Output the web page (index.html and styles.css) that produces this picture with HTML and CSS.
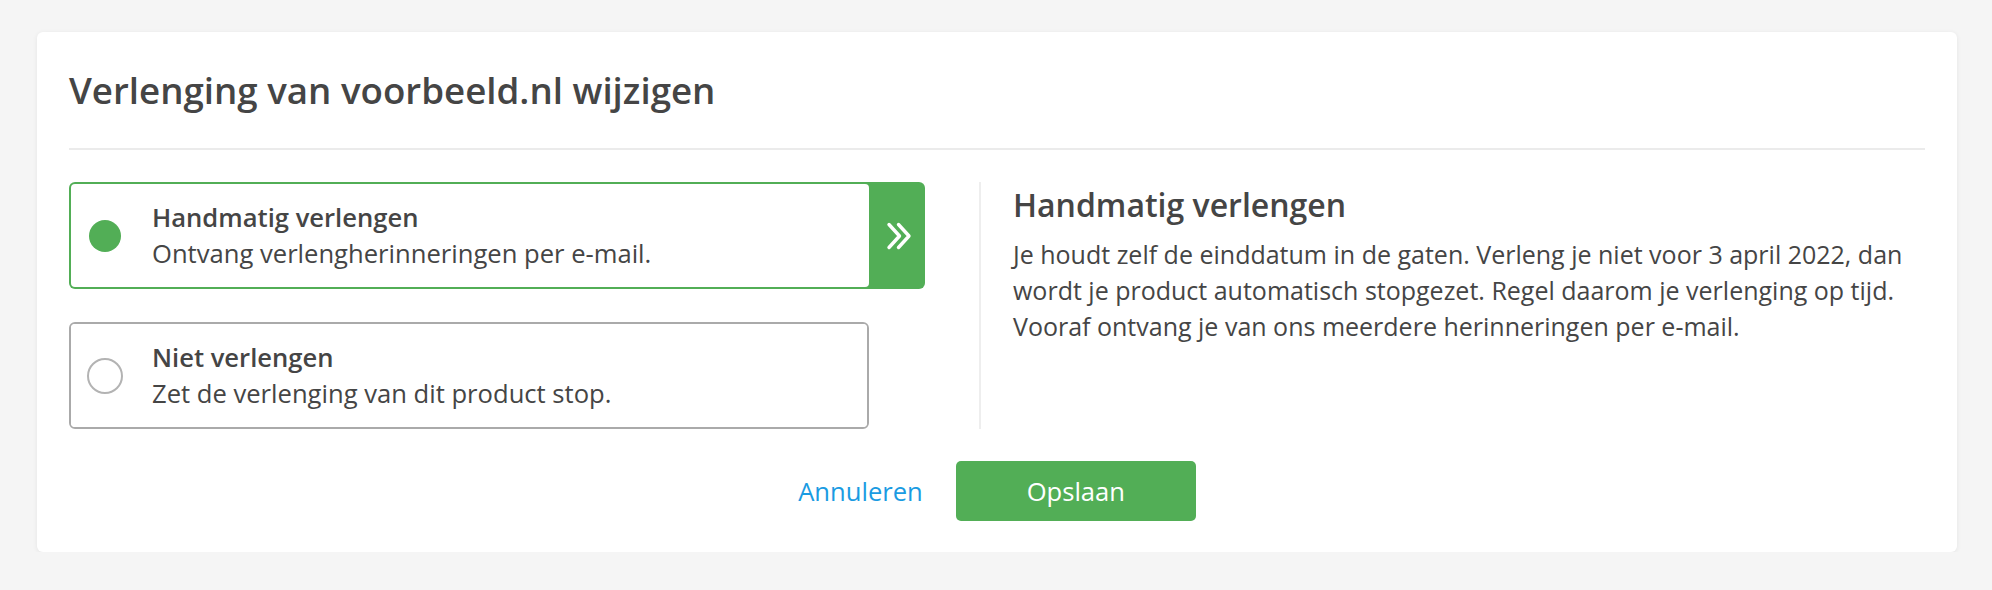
FILE: index.html
```html
<!DOCTYPE html>
<html lang="nl">
<head>
<meta charset="utf-8">
<title>Verlenging wijzigen</title>
<link rel="stylesheet" href="styles.css">
</head>
<body>
<div class="page">
  <div class="card">
    <h1 class="title">Verlenging van voorbeeld.nl wijzigen</h1>
    <div class="sep"></div>
    <div class="body">
      <div class="options">
        <div class="option option--selected">
          <div class="option-main">
            <span class="radio radio--on"></span>
            <span class="option-text">
              <span class="option-title">Handmatig verlengen</span>
              <span class="option-desc">Ontvang verlengherinneringen per e-mail.</span>
            </span>
          </div>
          <span class="option-tab">
            <svg class="chev" width="28" height="30" viewBox="0 0 28 30" aria-hidden="true">
              <path d="M4 3.5 L14.5 15 L4 26.5" fill="none" stroke="#fff" stroke-width="3.4" stroke-linecap="round" stroke-linejoin="round"/>
              <path d="M13.5 3.5 L24 15 L13.5 26.5" fill="none" stroke="#fff" stroke-width="3.4" stroke-linecap="round" stroke-linejoin="round"/>
            </svg>
          </span>
        </div>
        <div class="option">
          <div class="option-main">
            <span class="radio"></span>
            <span class="option-text">
              <span class="option-title">Niet verlengen</span>
              <span class="option-desc">Zet de verlenging van dit product stop.</span>
            </span>
          </div>
        </div>
      </div>
      <div class="info">
        <h2 class="info-title">Handmatig verlengen</h2>
        <p class="info-text">Je houdt zelf de einddatum in de gaten. Verleng je niet voor 3 april 2022, dan wordt je product automatisch stopgezet. Regel daarom je verlenging op tijd. Vooraf ontvang je van ons meerdere herinneringen per e-mail.</p>
      </div>
    </div>
    <div class="actions">
      <a class="cancel" href="#">Annuleren</a>
      <button class="save" type="button">Opslaan</button>
    </div>
  </div>
</div>
</body>
</html>
```

FILE: styles.css
```css
* { box-sizing: border-box; }

html, body {
  margin: 0;
  padding: 0;
  background: #f5f5f5;
  font-family: "Open Sans", "Noto Sans", "Liberation Sans", sans-serif;
  color: #454545;
}

.page {
  padding: 32px 35px 0 37px;
}

.card {
  width: 1920px;
  background: #fff;
  border-radius: 6px;
  box-shadow: 0 1px 5px rgba(0, 0, 0, 0.07);
  padding: 32px 32px 31px;
}

.title {
  margin: 0;
  font-size: 36.7px;
  font-weight: 600;
  line-height: 52px;
  color: #454545;
}

.sep {
  height: 2px;
  background: #ebebeb;
  margin-top: 32px;
}

.body {
  display: flex;
  margin-top: 32px;
}

.options {
  width: 910px;
  flex: none;
  display: flex;
  flex-direction: column;
  gap: 33px;
}

.option {
  display: flex;
  width: 800px;
  border: 2px solid #aaaaaa;
  border-radius: 6px;
  background: #fff;
}

.option--selected {
  width: auto;
  align-self: flex-start;
  border: none;
  background: #52ae56;
  padding: 2px 0 2px 2px;
}

.option-main {
  display: flex;
  align-items: center;
  padding: 16px 16px 15px 16px;
  width: 796px;
  background: #fff;
  border-radius: 4px;
}

.option--selected .option-main {
  width: 798px;
}

.radio {
  flex: none;
  width: 36px;
  height: 36px;
  border-radius: 50%;
  border: 2px solid #b3b3b3;
  margin-right: 29px;
}

.radio--on {
  border: 2px solid transparent;
  background: #52ae56;
  background-clip: content-box;
}

.option-text {
  display: flex;
  flex-direction: column;
  font-size: 25.6px;
  line-height: 36px;
}

.option-title {
  font-weight: 600;
}

.option-tab {
  width: 56px;
  display: flex;
  align-items: center;
  justify-content: center;
  padding-left: 4px;
}

.chev {
  display: block;
}

.info {
  flex: 1;
  border-left: 2px solid #eeeeee;
  padding-left: 32px;
}

.info-title {
  margin: 0 0 9px;
  font-size: 32px;
  font-weight: 600;
  line-height: 45px;
}

.info-text {
  margin: 0;
  font-size: 25px;
  line-height: 36px;
}

.actions {
  display: flex;
  justify-content: center;
  align-items: center;
  gap: 33px;
  margin-top: 32px;
}

.cancel {
  font-size: 25.6px;
  color: #1a9be2;
  text-decoration: none;
}

.save {
  width: 240px;
  height: 60px;
  border: none;
  border-radius: 5px;
  background: #52ae56;
  color: #fff;
  font-family: inherit;
  font-size: 25.6px;
  cursor: pointer;
}
```
